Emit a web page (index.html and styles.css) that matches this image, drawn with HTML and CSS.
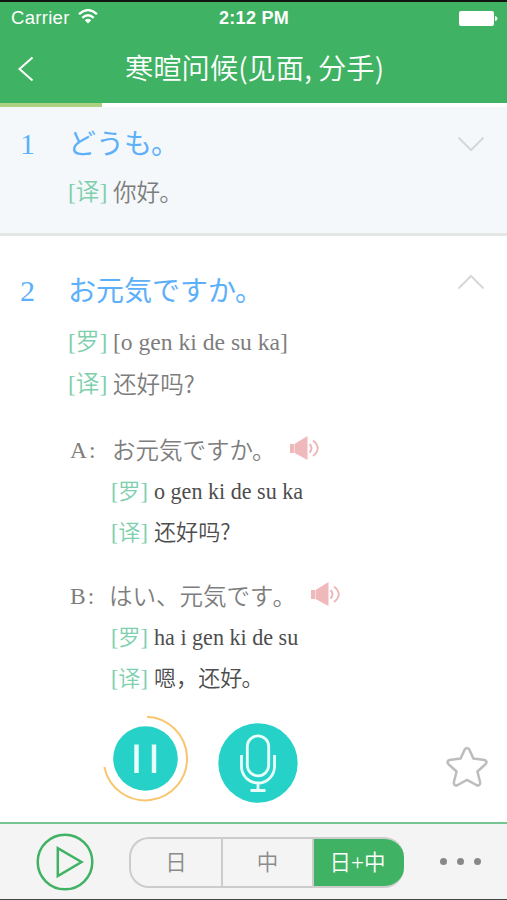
FILE: index.html
```html
<!DOCTYPE html>
<html lang="zh-CN">
<head>
<meta charset="utf-8">
<title>寒暄问候</title>
<link rel="stylesheet" href="styles.css">
</head>
<body>
<div class="app">
  <header class="header">
    <div class="status">
      <span class="carrier">Carrier</span>
      <svg class="wifi" width="20" height="15" viewBox="0 0 20 15" fill="none" stroke="#fff" stroke-width="2.4"><path d="M1 5.2Q10-3 19 5.2M4.3 8.8Q10 3.6 15.7 8.8"/><path d="M6.8 11.2Q10 8.4 13.2 11.2L10 14.6Z" fill="#fff" stroke="none"/></svg>
      <span class="time">2:12 PM</span>
      <svg class="battery" width="39" height="15" viewBox="0 0 39 15" fill="#fff"><rect width="35" height="15" rx="2"/><path d="M36 5Q38.5 5.5 38.5 7.5T36 10Z"/></svg>
    </div>
    <div class="nav">
      <svg class="back" width="16" height="26" viewBox="0 0 16 26" fill="none" stroke="#fff" stroke-width="2"><path d="M14.5 1.5L1.5 13L14.5 24.5"/></svg>
      <h1 class="heading">寒暄问候(见面, 分手)</h1>
    </div>
  </header>
  <div class="progress"><div class="progress-bar"></div></div>

  <section class="card card-closed">
    <span class="number">1</span>
    <div class="body">
      <h2 class="phrase" lang="ja">どうも<span class="stop">。</span></h2>
      <p class="line"><span class="tag">[译]</span><span class="cjk">你好<span class="stop">。</span></span></p>
    </div>
    <svg class="chevron" width="28" height="16" viewBox="0 0 28 16"><path d="M1.5 1.5L14 14L26.5 1.5"/></svg>
  </section>

  <section class="card card-open">
    <span class="number">2</span>
    <div class="body">
      <h2 class="phrase" lang="ja">お元気ですか<span class="stop">。</span></h2>
      <p class="line line-roman"><span class="tag">[罗]</span><span class="roman">[o gen ki de su ka]</span></p>
      <p class="line"><span class="tag">[译]</span><span class="cjk">还好吗?</span></p>

      <div class="talk">
        <p class="speech"><span class="who">A<i>:</i></span><span class="said" lang="ja">お元気ですか<span class="stop">。</span></span>
          <svg class="speaker" width="32" height="26" viewBox="0 0 32 26"><path class="horn" d="M1 9h4v9H1zM5.5 9L18.5 1v24L5.5 18z"/><path class="wave" d="M20.5 9Q24.5 13.3 20.5 17.5M24 5.5Q33.5 13.3 24 21"/></svg></p>
        <p class="note"><span class="tag">[罗]</span><span class="roman">o gen ki de su ka</span></p>
        <p class="note"><span class="tag">[译]</span><span class="cjk">还好吗?</span></p>
      </div>
      <div class="talk talk-b">
        <p class="speech"><span class="who who-b">B<i>:</i></span><span class="said" lang="ja">はい、元気です<span class="stop">。</span></span>
          <svg class="speaker speaker-b" width="32" height="26" viewBox="0 0 32 26"><path class="horn" d="M1 9h4v9H1zM5.5 9L18.5 1v24L5.5 18z"/><path class="wave" d="M20.5 9Q24.5 13.3 20.5 17.5M24 5.5Q33.5 13.3 24 21"/></svg></p>
        <p class="note"><span class="tag">[罗]</span><span class="roman">ha i gen ki de su</span></p>
        <p class="note"><span class="tag">[译]</span><span class="cjk">嗯，还好<span class="stop">。</span></span></p>
      </div>
    </div>
    <svg class="chevron" width="28" height="16" viewBox="0 0 28 16"><path d="M1.5 14.5L14 2L26.5 14.5"/></svg>
  </section>

  <div class="controls">
    <svg class="pause" width="86" height="87" viewBox="0 0 86 87"><path d="M44 1.8A41.8 41.8 0 1 1 1.3 52" fill="none" stroke="#f9c66f" stroke-width="2"/><circle cx="42.5" cy="43.5" r="32.3" fill="#26d2c8"/><path d="M33.5 29.5v28.5M51 29.5v28.5" stroke="#e9fffc" stroke-width="4.4"/></svg>
    <svg class="mic" width="80" height="80" viewBox="0 0 80 80" fill="none" stroke="#e9fffc" stroke-width="2.8"><circle cx="40" cy="40" r="39.7" fill="#26d2c8" stroke="none"/><rect x="29.3" y="12.8" width="21.4" height="40" rx="10.7"/><path d="M23.5 32v11.5a16.5 16.5 0 0 0 33 0V32M40 60v7M32.5 67.5h15"/></svg>
    <svg class="star" width="42" height="42" viewBox="0 0 42 42"><path d="M18.7 3.6Q21 .6 23.3 3.6L27.5 12.6L38.5 14Q42 15.3 39.5 18.2L31.4 25.5L34.2 36.5Q34 40.6 30.3 39L21 33.8L11.7 39Q8 40.6 7.8 36.5L10.6 25.5L2.5 18.2Q0 15.3 3.5 14L14.5 12.6Z"/></svg>
  </div>

  <footer class="toolbar">
    <svg class="play" width="58" height="58" viewBox="0 0 58 58" fill="none" stroke="#40b263" stroke-width="2.5"><circle cx="29" cy="29" r="27.3"/><path d="M21.8 15.2V43L45.5 29Z"/></svg>
    <div class="segments">
      <span class="segment">日</span><span class="segment">中</span><span class="segment segment-on">日<b>+</b>中</span>
    </div>
    <div class="more"><i></i><i></i><i></i></div>
  </footer>
</div>
</body>
</html>
```
FILE: styles.css
```css
* { box-sizing: border-box; margin: 0; padding: 0; }
body { background: #fff; font-family: "Liberation Serif", "Noto Sans CJK SC", serif; font-weight: 350; }
:lang(ja) { font-family: "Noto Sans CJK JP", sans-serif; }
svg { display: block; flex: none; }
.app { width: 507px; height: 900px; display: flex; flex-direction: column; overflow: hidden; border-top: 2px solid #101510; border-bottom: 1px solid #444; }

.header { height: 101px; background: #40b263; color: #fff; flex: none; }
.status { height: 32px; display: flex; align-items: center; padding: 0 9px 0 11px; font: 400 18.5px "Liberation Sans", sans-serif; }
.carrier { width: 60px; letter-spacing: .3px; }
.wifi { margin-left: 7px; margin-top: -3px; }
.time { margin-left: 121px; width: 80px; font-weight: 700; font-size: 18px; letter-spacing: .3px; white-space: nowrap; }
.battery { margin-left: auto; }
.nav { height: 69px; display: flex; align-items: center; padding-left: 18px; }
.heading { margin: -3px 0 0 91px; font: 350 28.3px/40px "Noto Sans CJK SC", sans-serif; white-space: nowrap; }

.progress { height: 4px; background: #fff; flex: none; }
.progress-bar { width: 102px; height: 4px; background: #aed082; }

.card { display: flex; flex: none; }
.card-closed { height: 129px; background: #f4f8fa; border-bottom: 3px solid #e5e6e6; padding-top: 16px; }
.card-open { padding-top: 34px; height: 476px; }
.number { width: 68px; padding-left: 20px; font-size: 30px; line-height: 41px; color: #5cb0fa; }
.body { width: 370px; }
.phrase { font-size: 28px; line-height: 38px; height: 40px; font-weight: 400; color: #5cb0fa; white-space: nowrap; }
.stop { margin-left: -1px; }
.line, .note, .speech { display: flex; white-space: nowrap; }
.line { height: 42px; line-height: 42px; font-size: 23.6px; color: #7d7d7d; }
.card-closed .line { margin-top: 8px; }
.line-roman { margin-top: 11px; }
.tag { width: 45px; color: #7dcfae; }
.cjk { font-family: "Noto Sans CJK SC", sans-serif; margin-top: -1px; }
.talk { margin-top: 25px; }
.talk-b { margin-top: 24px; }
.speech { height: 41px; line-height: 41px; font-size: 23.5px; color: #7d7d7d; align-items: center; }
.who { width: 44px; padding-left: 2px; }
.who-b { width: 41px; }
.who i { font-style: normal; margin-left: 2px; }
.said { margin-top: -2px; }
.speaker { margin: -5px 0 0 13px; }
.speaker-b { margin-left: 14px; }
.horn { fill: #efb9bb; }
.wave { fill: none; stroke: #efb9bb; stroke-width: 2; }
.note { height: 40.5px; line-height: 41px; font-size: 22.1px; color: #4d4d4d; padding-left: 43px; }
.note .tag { width: 43px; }
.note .cjk { margin-top: -2px; }
.chevron { margin-left: 19px; fill: none; stroke: #d5d7d8; stroke-width: 2; }
.card-closed .chevron { margin-top: 13px; }
.card-open .chevron { margin-top: 4px; }

.controls { height: 110px; display: flex; padding: 3px 0 0 103px; flex: none; }
.mic { margin: 8px 0 0 29px; }
.star { margin: 31px 0 0 148px; fill: none; stroke: #bdbdbd; stroke-width: 2.5; stroke-linejoin: round; }

.toolbar { flex: 1; display: flex; align-items: center; border-top: 2px solid #78c594; background: #f4f4f4; padding-left: 36px; }
.segments { margin: 2px 0 0 35px; width: 275px; height: 51px; display: grid; grid-template-columns: 92px 91px 92px; border-radius: 20px; overflow: hidden; border: 2px solid #ccc; border-right: 0; background: #f4f4f4; }
.segment { font: 350 21.5px/44px "Noto Sans CJK SC", sans-serif; color: #8b8b8b; text-align: center; border-right: 2px solid #ccc; }
.segment-on { background: #40b263; color: #fff; border: 0; margin: -2px 0; line-height: 48px; width: 91px; padding-right: 4px; border-radius: 0 20px 20px 0; }
.segment-on b { font: 23px "Liberation Serif", serif; }
.more { margin-left: 36px; display: flex; gap: 10px; }
.more i { width: 7px; height: 7px; border-radius: 50%; background: #888; }
```
